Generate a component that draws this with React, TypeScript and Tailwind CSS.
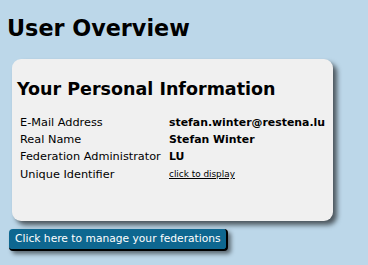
import React from 'react';

const rows: { label: string; value: string; link?: boolean }[] = [
  { label: 'E-Mail Address', value: 'stefan.winter@restena.lu' },
  { label: 'Real Name', value: 'Stefan Winter' },
  { label: 'Federation Administrator', value: 'LU' },
  { label: 'Unique Identifier', value: 'click to display', link: true },
];

export default function App() {
  return (
    <div className="w-[368px] h-[265px] overflow-hidden bg-[#bcd7e9] font-['DejaVu_Sans',Verdana,sans-serif] text-black">
      <h1 className="pl-[7px] pt-[15px] text-[22.3px] font-bold leading-[27px]">User Overview</h1>

      <div className="ml-[12px] mt-[17px] w-[321px] h-[162px] rounded-[9px] bg-[#f0f0f0] shadow-[4px_4px_5px_rgba(0,0,0,0.6)] pl-[5px] pt-[19px]">
        <h2 className="text-[17.5px] font-bold leading-[22px]">Your Personal Information</h2>
        <table className="mt-[14px] ml-[3px] text-[11.3px] leading-[17px] border-separate border-spacing-0">
          <tbody>
            {rows.map(r => (
              <tr key={r.label}>
                <td className="w-[149px] p-0 whitespace-nowrap">{r.label}</td>
                <td className="p-0 font-bold text-[10.9px] whitespace-nowrap">
                  {r.link ? (
                    <a href="#" className="font-normal text-[8.9px] underline">{r.value}</a>
                  ) : r.value}
                </td>
              </tr>
            ))}
          </tbody>
        </table>
      </div>

      <button className="ml-[9px] mt-[8px] w-[219px] h-[22px] pl-[6px] text-left rounded-[4px] bg-[#0e6790] text-white text-[10.7px] leading-[20px] border-r-2 border-b-2 border-black shadow-[3px_3px_4px_rgba(0,0,0,0.5)] font-['DejaVu_Sans',Verdana,sans-serif]">
        Click here to manage your federations
      </button>
    </div>
  );
}
